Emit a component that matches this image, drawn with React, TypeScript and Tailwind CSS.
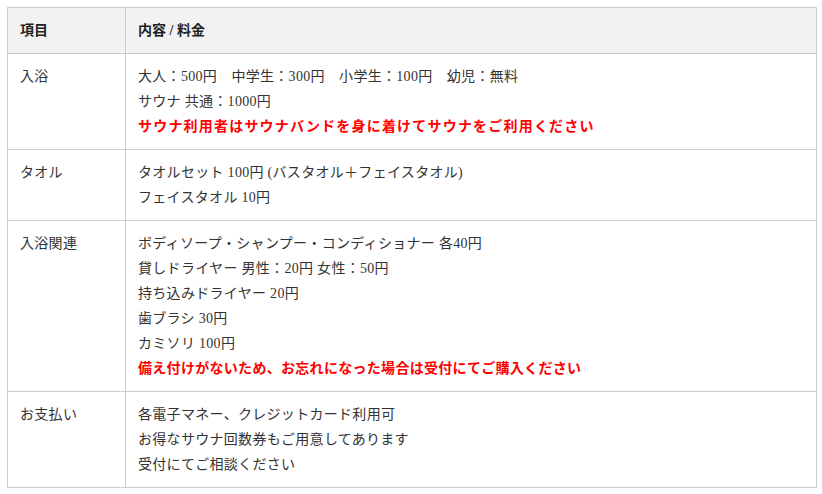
const rows: { label: string; lines: { text: string; red?: boolean; wide?: boolean }[] }[] = [
  {
    label: "入浴",
    lines: [
      { text: "大人：500円　中学生：300円　小学生：100円　幼児：無料" },
      { text: "サウナ 共通：1000円" },
      { text: "サウナ利用者はサウナバンドを身に着けてサウナをご利用ください", red: true, wide: true },
    ],
  },
  {
    label: "タオル",
    lines: [
      { text: "タオルセット 100円 (バスタオル＋フェイスタオル)" },
      { text: "フェイスタオル 10円" },
    ],
  },
  {
    label: "入浴関連",
    lines: [
      { text: "ボディソープ・シャンプー・コンディショナー 各40円" },
      { text: "貸しドライヤー 男性：20円 女性：50円" },
      { text: "持ち込みドライヤー 20円" },
      { text: "歯ブラシ 30円" },
      { text: "カミソリ 100円" },
      { text: "備え付けがないため、お忘れになった場合は受付にてご購入ください", red: true },
    ],
  },
  {
    label: "お支払い",
    lines: [
      { text: "各電子マネー、クレジットカード利用可" },
      { text: "お得なサウナ回数券もご用意してあります" },
      { text: "受付にてご相談ください" },
    ],
  },
];

export default function App() {
  return (
    <div className="bg-white w-[822px] h-[494px] pt-[7px] pl-[7px] font-['Liberation_Serif','Noto_Sans_CJK_JP',serif] text-[14px] leading-[25px] text-[#333]">
      <table className="w-[810px] border-collapse border border-[#ccc]">
        <thead>
          <tr className="bg-[#f2f2f2]">
            <th className="w-[118px] border border-[#ccc] px-3 py-[10px] text-left font-bold text-[#222]">
              項目
            </th>
            <th className="border border-[#ccc] px-3 py-[10px] text-left font-bold text-[#222]">
              内容 / 料金
            </th>
          </tr>
        </thead>
        <tbody>
          {rows.map((row) => (
            <tr key={row.label}>
              <td className="border border-[#ccc] px-3 py-[10px] align-top tracking-[0.3px]">
                {row.label}
              </td>
              <td className="border border-[#ccc] px-3 py-[10px] align-top tracking-[0.3px]">
                {row.lines.map((line) => (
                  <div
                    key={line.text}
                    className={
                      line.red
                        ? line.wide
                          ? "font-bold text-[#ff0000] tracking-[1.2px]"
                          : "font-bold text-[#ff0000]"
                        : ""
                    }
                  >
                    {line.text}
                  </div>
                ))}
              </td>
            </tr>
          ))}
        </tbody>
      </table>
    </div>
  );
}
